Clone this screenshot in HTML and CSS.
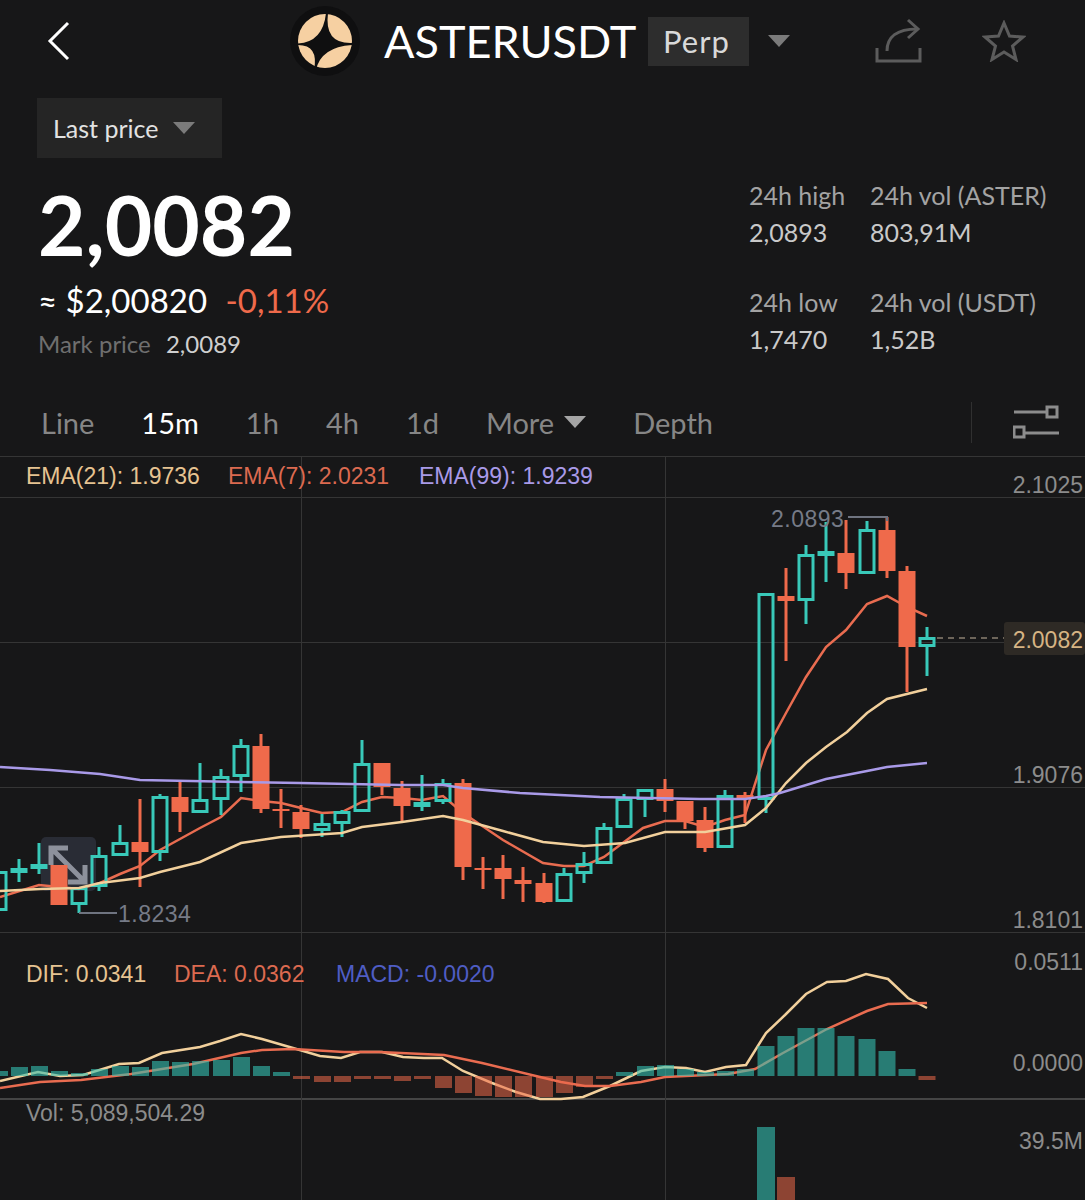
FILE: index.html
```html
<!DOCTYPE html>
<html lang="en">
  <head>
    <meta charset="UTF-8" />
    <meta name="viewport" content="width=device-width, initial-scale=1.0" />
    <title>ASTERUSDT Perp</title>
    <link rel="stylesheet" href="styles.css">
  </head>

  <body>
    <div class="page">
      <div class="top-bar">
        <svg class="back-icon" viewBox="0 0 24 40" width="24" height="40">
          <path d="M21 2 L3 20 L21 38" />
        </svg>
        <svg class="coin-logo" viewBox="0 0 70 70" width="70" height="70">
          <circle cx="35" cy="35" r="35" fill="#0f0f10" />
          <circle cx="35" cy="35" r="27" fill="#f6d0a2" />
          <path fill="#0f0f10" d="M38 7 L36 7 Q33 36 8 37.5 L8 39 Q29 39 24 64 L26 64 Q31 41 62 39 L62 37 Q34 38 38 7 Z" />
        </svg>
        <span class="pair-name">ASTERUSDT</span>
        <span class="pair-tag">Perp</span>
        <span class="caret caret-pair"></span>
        <svg class="share-icon" viewBox="0 0 47 46" width="47" height="46">
          <path d="M2 30 V43 H45 V30" />
          <path d="M12 33 C12 19 22 11 42 11" />
          <path d="M33 2 L43 11 L33 20" />
        </svg>
        <svg class="star-icon" viewBox="0 0 44 42" width="44" height="42">
          <path d="M22 3 L27.5 16 L41 17 L30.5 26 L34 39.5 L22 32 L10 39.5 L13.5 26 L3 17 L16.5 16 Z" />
        </svg>
      </div>

      <div class="price-type">
        <span>Last price</span>
        <span class="caret caret-type"></span>
      </div>

      <div class="ticker">
        <div class="ticker-left">
          <div class="last-price">2,0082</div>
          <div class="fiat-line">
            <span class="fiat-price">≈ $2,00820</span>
            <span class="change">-0,11%</span>
          </div>
          <div class="mark-line">
            <span class="mark-label">Mark price</span>
            <span class="mark-value">2,0089</span>
          </div>
        </div>
        <div class="stats">
          <div class="stat"><div class="stat-label">24h high</div><div class="stat-value">2,0893</div></div>
          <div class="stat"><div class="stat-label">24h vol (ASTER)</div><div class="stat-value">803,91M</div></div>
          <div class="stat"><div class="stat-label">24h low</div><div class="stat-value">1,7470</div></div>
          <div class="stat"><div class="stat-label">24h vol (USDT)</div><div class="stat-value">1,52B</div></div>
        </div>
      </div>

      <div class="tabs">
        <span class="tab">Line</span>
        <span class="tab active">15m</span>
        <span class="tab">1h</span>
        <span class="tab">4h</span>
        <span class="tab">1d</span>
        <span class="tab tab-more">More <span class="caret caret-more"></span></span>
        <span class="tab">Depth</span>
        <span class="tabs-divider"></span>
        <svg class="settings-icon" viewBox="0 0 46 34" width="46" height="34">
          <path d="M1 7 H34 M34 2 H44 V12 H34 Z M11 28 H46 M1 22 H11 V32 H1 Z" />
        </svg>
      </div>

      <!-- viewBox uses page coordinates so chart values read the same as the screen -->
      <svg class="chart" viewBox="0 456 1085 744" width="1085" height="744">
        <path class="grid" d="M0 456.5H1085M0 497.5H1085M0 642.5H1085M0 787.5H1085M0 932.5H1085" />
        <path class="grid grid-strong" d="M0 1099H1085" />
        <path class="grid" d="M301.5 456V1200M665.5 456V1200" />

        <!-- expand button sits under the candles -->
        <rect class="expand-box" x="41" y="837" width="55" height="54" rx="5" />
        <path class="expand-arrow" d="M68 848H51V865M51 848L85 882M85 865V882H68" />

        <polyline class="line ema7" points="0,897 39,885 79,889 100,883 120,874 140,866 160,850 200,828 221,817 241,798 261,801 281,803 301,808 322,813 342,812 362,802 382,797 402,798 422,800 443,796 463,813 503,840 543,863 564,866 584,866 604,857 643,828 665,821 685,821 705,827 725,820 745,815 766,750 786,713 806,677 826,647 846,630 867,604 887,596 907,607 927,616" />

        <path class="wick-down" d="M140 799V887M180 780V832M261 734V813M281 789V828M301 805V838M382 763V795M402 781V822M463 779V880M483 857V889M503 855V899M523 867V902M544 873V903M665 779V812M685 801V829M705 807V852M745 792V823M786 568V661M846 520V589M887 517V578M907 566V692" />
        <g class="candle-down">
          <rect x="50.5" y="865" width="17" height="40" />
          <rect x="131.5" y="842" width="17" height="10" />
          <rect x="171.5" y="797" width="17" height="15" />
          <rect x="252.5" y="746" width="17" height="63" />
          <rect x="272.5" y="809" width="17" height="2" />
          <rect x="292.5" y="812" width="17" height="17" />
          <rect x="373.5" y="763" width="17" height="24" />
          <rect x="393.5" y="788" width="17" height="18" />
          <rect x="454.5" y="783" width="17" height="84" />
          <rect x="474.5" y="868" width="17" height="2" />
          <rect x="494.5" y="868" width="17" height="11" />
          <rect x="514.5" y="880" width="17" height="4" />
          <rect x="535.5" y="883" width="17" height="19" />
          <rect x="656.5" y="789" width="17" height="12" />
          <rect x="676.5" y="801" width="17" height="20" />
          <rect x="696.5" y="820" width="17" height="28" />
          <rect x="736.5" y="795" width="17" height="4" />
          <rect x="777.5" y="596" width="17" height="5" />
          <rect x="837.5" y="553" width="17" height="20" />
          <rect x="878.5" y="530" width="17" height="41" />
          <rect x="898.5" y="571" width="17" height="76" />
        </g>

        <path class="wick-up" d="M19 859V868M19 873V882M39 843V864M39 869V874M79 905V913M99 847V855M99 887V891M120 825V842M160 794V796M160 853V861M200 763V799M221 769V776M221 800V815M241 739V745M241 777V792M322 814V823M322 831V837M342 810V811M342 824V837M362 740V763M422 775V802M422 807V811M443 779V783M443 802V804M564 868V873M584 852V863M584 874V883M604 823V827M624 794V798M645 800V817M725 790V795M766 800V813M806 545V554M806 601V624M826 522V582M867 521V529M927 627V637M927 647V676" />
        <g class="candle-up">
          <rect x="-8" y="872.5" width="14" height="37" />
          <rect x="12" y="869.5" width="14" height="2" />
          <rect x="32" y="865.5" width="14" height="2" />
          <rect x="72" y="888.5" width="14" height="15" />
          <rect x="92" y="856.5" width="14" height="29" />
          <rect x="113" y="843.5" width="14" height="11" />
          <rect x="153" y="797.5" width="14" height="54" />
          <rect x="193" y="800.5" width="14" height="11" />
          <rect x="214" y="777.5" width="14" height="21" />
          <rect x="234" y="746.5" width="14" height="29" />
          <rect x="315" y="824.5" width="14" height="5" />
          <rect x="335" y="812.5" width="14" height="10" />
          <rect x="355" y="764.5" width="14" height="46" />
          <rect x="415" y="803.5" width="14" height="2" />
          <rect x="436" y="784.5" width="14" height="16" />
          <rect x="557" y="874.5" width="14" height="26" />
          <rect x="577" y="864.5" width="14" height="8" />
          <rect x="597" y="828.5" width="14" height="34" />
          <rect x="617" y="799.5" width="14" height="27" />
          <rect x="638" y="790.5" width="14" height="8" />
          <rect x="718" y="796.5" width="14" height="50" />
          <rect x="759" y="594.5" width="14" height="204" />
          <rect x="799" y="555.5" width="14" height="44" />
          <rect class="solid" x="819" y="552.5" width="14" height="2" />
          <rect x="860" y="530.5" width="14" height="42" />
          <rect x="920" y="638.5" width="14" height="7" />
        </g>

        <polyline class="line ema21" points="0,891 40,889 79,888 100,883 140,878 160,872 200,862 241,843 281,837 342,833 362,827 402,822 443,816 463,820 503,831 543,842 584,846 625,843 665,832 705,832 745,825 766,808 786,783 806,763 826,747 847,732 867,713 887,699 927,689" />
        <polyline class="line ema99" points="0,767 50,770 100,774 140,780 241,782 300,783 400,785 443,785 463,788 520,793 600,797 700,799 745,799 766,796 780,793 826,779 867,771 887,767 927,763" />

        <path class="hilo-line" d="M848 517H887V521M79 913H117" />
        <text class="hilo-label" x="771" y="527">2.0893</text>
        <text class="hilo-label" x="118" y="922">1.8234</text>

        <path class="last-line" d="M937 638H1004" />
        <rect class="last-tag" x="1004" y="622" width="81" height="33" rx="3" />
        <text class="axis-label last-label" x="1083" y="648">2.0082</text>

        <text class="legend ema21-text" x="26" y="484">EMA(21): 1.9736</text>
        <text class="legend ema7-text" x="228" y="484">EMA(7): 2.0231</text>
        <text class="legend ema99-text" x="419" y="484">EMA(99): 1.9239</text>

        <text class="axis-label" x="1083" y="493">2.1025</text>
        <text class="axis-label" x="1083" y="783">1.9076</text>
        <text class="axis-label" x="1083" y="928">1.8101</text>
        <text class="axis-label" x="1083" y="970">0.0511</text>
        <text class="axis-label" x="1083" y="1071">0.0000</text>
        <text class="axis-label" x="1083" y="1149">39.5M</text>

        <text class="legend ema21-text" x="26" y="982">DIF: 0.0341</text>
        <text class="legend ema7-text" x="174" y="982">DEA: 0.0362</text>
        <text class="legend macd-text" x="336" y="982">MACD: -0.0020</text>

        <polyline class="line dif" points="0,1081 38,1072 60,1076 83,1075 119,1064 139,1063 162,1053 200,1047 220,1041 241,1034 262,1039 293,1048 320,1056 341,1058 360,1052 382,1052 403,1057 424,1058 442,1058 463,1071 492,1083 516,1092 540,1099 561,1099 583,1097 610,1086 641,1071 665,1067 686,1068 705,1072 726,1067 746,1065 766,1033 785,1015 806,994 827,982 846,981 866,974 888,979 908,998 927,1008" />
        <polyline class="line dea" points="0,1088 40,1082 81,1080 131,1074 193,1064 241,1053 262,1050 293,1049 344,1052 379,1052 444,1055 482,1063 540,1077 561,1082 585,1086 610,1086 641,1082 665,1077 686,1076 728,1074 755,1069 783,1053 827,1029 867,1011 888,1004 927,1003" />

        <path class="macd-up" d="M-9 1071h17v5h-17zM11 1067h17v9h-17zM31 1066h17v10h-17zM51 1071h17v5h-17zM71 1073h17v3h-17zM91 1069h17v7h-17zM112 1066h17v10h-17zM132 1067h17v9h-17zM152 1061h17v15h-17zM172 1062h17v14h-17zM192 1061h17v15h-17zM213 1060h17v16h-17zM233 1057h17v19h-17zM253 1066h17v10h-17zM273 1072h17v4h-17zM616 1072h17v4h-17zM637 1066h17v10h-17zM657 1065h17v11h-17zM677 1069h17v7h-17zM697 1072h17v4h-17zM717 1071h17v5h-17zM737 1069h17v7h-17zM757.5 1046h17v30h-17zM777.5 1036h17v40h-17zM797.5 1028h17v48h-17zM817.5 1028h17v48h-17zM837.5 1036h17v40h-17zM858.5 1039h17v37h-17zM878.5 1051h17v25h-17zM898.5 1069h17v7h-17z" />
        <path class="macd-down" d="M293 1076h17v3h-17zM314 1076h17v6h-17zM334 1076h17v6h-17zM354 1076h17v3h-17zM374 1076h17v3h-17zM394 1076h17v5h-17zM414 1076h17v3h-17zM435 1076h17v12h-17zM455 1076h17v17h-17zM475 1076h17v20h-17zM495 1076h17v21h-17zM515 1076h17v21h-17zM536 1076h17v21h-17zM556 1076h17v17h-17zM576 1076h17v11h-17zM596 1076h17v3h-17zM918.5 1076h17v4h-17z" />

        <text class="legend vol-text" x="26" y="1121">Vol: 5,089,504.29</text>
        <rect class="vol-up" x="757" y="1127" width="18" height="73" />
        <rect class="vol-down" x="777" y="1177" width="18" height="23" />
      </svg>
    </div>
  </body>
</html>
```

FILE: styles.css
```css
/* General page settings */
body {
  margin: 0;
  background-color: #171718;
  font-family: Lato, "Open Sans", sans-serif;
  color: #ffffff;
}

.page {
  width: 1085px;
  height: 1200px;
  overflow: hidden;
}

/* Small triangles used on dropdowns */
.caret {
  display: inline-block;
  width: 0;
  height: 0;
  border-left: 11px solid transparent;
  border-right: 11px solid transparent;
  border-top: 12px solid #7b7b7b;
}

/* Top bar */
.top-bar {
  display: flex;
  align-items: center;
  height: 82px;
  padding-left: 47px;
}

.back-icon {
  margin-right: 219px;
}

.back-icon path {
  fill: none;
  stroke: #ffffff;
  stroke-width: 3;
}

.coin-logo {
  margin-right: 24px;
}

.pair-name {
  font-size: 45px;
  line-height: 1;
  width: 251px;
}

.pair-tag {
  margin-left: 13px;
  width: 101px;
  height: 49px;
  box-sizing: border-box;
  padding-left: 15px;
  background-color: #2d2d2d;
  font-size: 31px;
  line-height: 49px;
  letter-spacing: 1px;
  color: #d9d9d9;
}

.caret-pair {
  margin-left: 19px;
}

.share-icon {
  margin-left: 85px;
}

.share-icon path,
.star-icon path {
  fill: none;
  stroke: #5c5c5c;
  stroke-width: 3;
}

.star-icon {
  margin-left: 60px;
}

/* Price type dropdown */
.price-type {
  display: flex;
  align-items: center;
  width: 185px;
  height: 60px;
  box-sizing: border-box;
  margin: 16px 0 0 37px;
  padding-left: 16px;
  background-color: #252525;
  font-size: 25px;
  color: #e2e2e2;
}

.caret-type {
  margin-left: 15px;
}

/* Price block and 24h stats */
.ticker {
  display: flex;
  justify-content: space-between;
  height: 230px;
  padding: 0 0 0 38px;
}

.last-price {
  margin-top: 25px;
  font-size: 82px;
  font-weight: 700;
  line-height: 82px;
}

.fiat-line {
  margin-top: 15px;
  font-size: 33px;
  line-height: 40px;
}

.change {
  margin-left: 10px;
  color: #ef6a4b;
}

.mark-line {
  margin-top: 9px;
  font-size: 24px;
  line-height: 30px;
}

.mark-label {
  color: #6f6f6f;
}

.mark-value {
  margin-left: 9px;
  color: #cfcfcf;
}

.stats {
  display: grid;
  grid-template-columns: 121px 215px;
  grid-auto-rows: 107px;
  margin-top: 19px;
}

.stat {
  font-size: 25px;
  line-height: 37px;
}

.stat-label {
  color: #a3a3a3;
}

.stat-value {
  color: #c9c9c9;
}

/* Interval tabs */
.tabs {
  display: flex;
  align-items: center;
  height: 68px;
  padding-left: 41px;
  font-size: 29px;
  color: #868686;
}

.tab {
  margin-right: 47px;
}

.tab.active {
  color: #ffffff;
}

.tab-more {
  display: flex;
  align-items: center;
}

.caret-more {
  margin-left: 10px;
  border-top-color: #a5a5a5;
}

.tabs-divider {
  width: 1px;
  height: 41px;
  margin-left: 211px;
  background-color: #303030;
}

.settings-icon {
  margin-left: 41px;
}

.settings-icon path {
  fill: none;
  stroke: #8c8c8c;
  stroke-width: 3;
}

/* Chart */
.chart {
  display: block;
  font-family: "Liberation Sans", Arial, sans-serif;
}

.grid {
  fill: none;
  stroke: #353535;
  stroke-width: 1;
}

.grid-strong {
  stroke: #454545;
  stroke-width: 2;
}

.expand-box {
  fill: #292c35;
}

.expand-arrow {
  fill: none;
  stroke: #8d919c;
  stroke-width: 5;
}

.line {
  fill: none;
  stroke-width: 2.5;
}

.ema7,
.dea {
  stroke: #e96c50;
}

.ema21,
.dif {
  stroke: #f2d09c;
}

.ema99 {
  stroke: #a99ae8;
}

.wick-down {
  fill: none;
  stroke: #ef6a4b;
  stroke-width: 3;
}

.wick-up {
  fill: none;
  stroke: #39c9b9;
  stroke-width: 3;
}

.candle-down rect {
  fill: #ef6a4b;
}

.candle-up rect {
  fill: none;
  stroke: #39c9b9;
  stroke-width: 3;
}

.candle-up rect.solid {
  fill: #39c9b9;
}

.hilo-line {
  fill: none;
  stroke: #6f7480;
  stroke-width: 2;
}

.hilo-label {
  font-size: 23px;
  letter-spacing: 0.5px;
  fill: #767b87;
}

.last-line {
  fill: none;
  stroke: #6d655a;
  stroke-width: 2;
  stroke-dasharray: 6 5;
}

.last-tag {
  fill: #2e2a25;
}

.axis-label {
  font-size: 23px;
  text-anchor: end;
  fill: #8c8c8c;
}

.last-label {
  fill: #d6b484;
}

.legend {
  font-size: 23px;
}

.ema21-text {
  fill: #e6c391;
}

.ema7-text {
  fill: #dc6a50;
}

.ema99-text {
  fill: #a99ae8;
}

.macd-text {
  fill: #4f5dc4;
}

.vol-text {
  fill: #8c8c8c;
}

.macd-up,
.vol-up {
  fill: #33bfb3;
  fill-opacity: 0.6;
}

.macd-down,
.vol-down {
  fill: #ef6a4b;
  fill-opacity: 0.55;
}
```
